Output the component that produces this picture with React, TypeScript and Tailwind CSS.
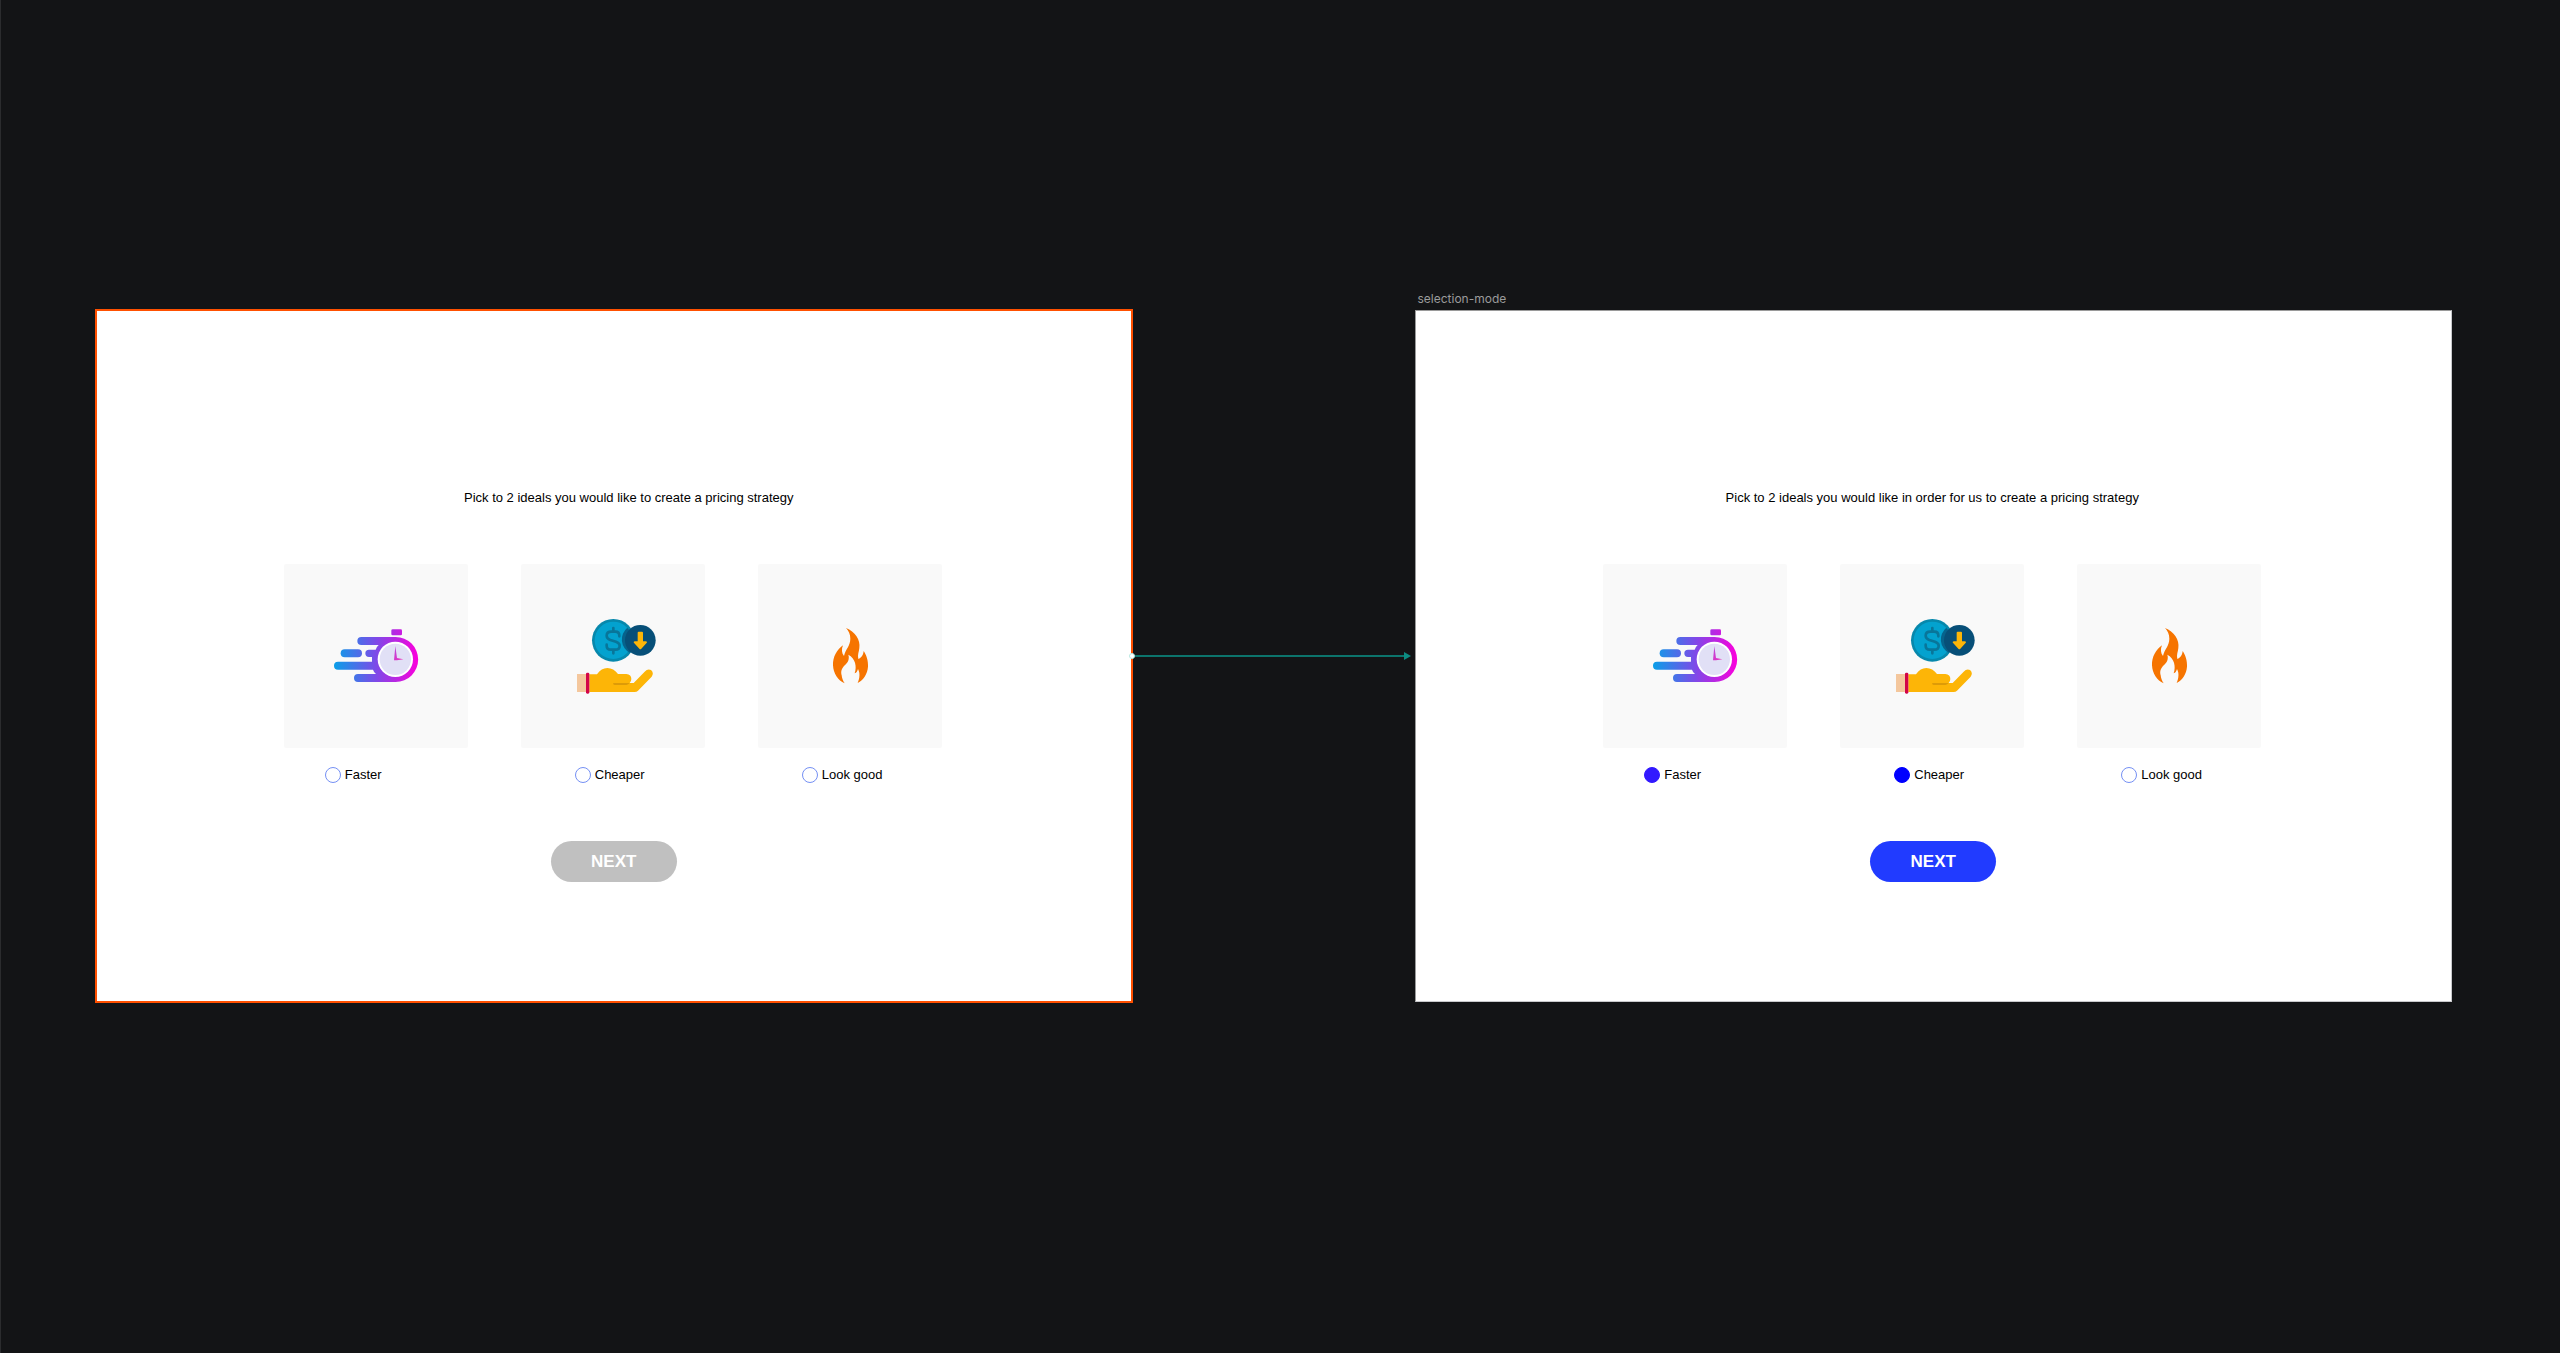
import { useId, useState } from "react";

function StopwatchIcon() {
  return (
    <svg viewBox="3 3 330 270" className="h-[90px] w-[110px]" aria-hidden="true">
      <defs>
        <linearGradient id="speed" gradientUnits="userSpaceOnUse" x1="42" y1="0" x2="294" y2="0">
          <stop offset="0" stopColor="#0a9fe8" />
          <stop offset="0.5" stopColor="#7d4ae8" />
          <stop offset="1" stopColor="#fb00dc" />
        </linearGradient>
        <linearGradient id="hands" x1="0" y1="0" x2="1" y2="1">
          <stop offset="0" stopColor="#b44be0" />
          <stop offset="1" stopColor="#f02bb8" />
        </linearGradient>
      </defs>
      <g fill="url(#speed)">
        <rect x="214" y="58" width="32" height="18" rx="4" />
        <path d="M124 81H227A67.500 67.500 0 0 1 227 216H114A12 12 0 0 1 114 192H168Q161 186 159 179H54A12 12 0 0 1 54 155H156V141H147A11 11 0 0 1 147 119H167Q170 110 176 105H124A12 12 0 0 1 124 81Z" />
        <rect x="62" y="118" width="64" height="24" rx="12" />
      </g>
      <circle cx="226" cy="148" r="53" fill="#fff" />
      <circle cx="226" cy="148" r="47" fill="#e1e0f6" />
      <path d="M226 108L231 144L250 148L231 151H222Z" fill="url(#hands)" />
    </svg>
  );
}

function SavingsIcon() {
  return (
    <svg viewBox="-18 3 330 300" className="h-[100px] w-[110px]" aria-hidden="true">
      <circle cx="148" cy="106" r="64" fill="#0788ac" />
      <circle cx="148" cy="106" r="56" fill="#03a2cf" />
      <path
        d="M148 69V80M148 134V145M166 94V92Q166 80 154 80H142Q128 80 128 92Q128 101 139 105L156 110Q167 114 167 122Q167 134 154 134H141Q128 134 128 122V119"
        fill="none"
        stroke="#08769a"
        strokeWidth="8"
        strokeLinecap="round"
      />
      <path d="M190 68A64 64 0 0 1 198 144A46 46 0 0 1 190 68Z" fill="#06638c" />
      <circle cx="229" cy="106" r="46" fill="#074f78" />
      <path d="M221 83Q221 80 224 80H234Q237 80 237 83V109H245Q252 110 247 115L232 131Q229 134 226 131L211 115Q206 110 213 109H221Z" fill="#fdb608" />
      <rect x="39" y="207" width="30" height="54" fill="#f4c79d" />
      <path d="M76 208H99Q112 189 130 189Q149 189 162 207H187Q202 208 202 222Q202 229 197 234H209L242 200Q251 190 261 195Q271 204 263 215L222 257Q218 261 212 261H76Z" fill="#fdb507" />
      <path d="M149 234H197Q194 239 187 240H152Q144 237 149 234Z" fill="#dd9b08" />
      <rect x="66" y="203" width="10" height="63" rx="4" fill="#d30548" />
    </svg>
  );
}

function FlameIcon() {
  return (
    <svg viewBox="0 3 210 240" className="h-20 w-[70px]" aria-hidden="true">
      <path
        d="M93 39C120 50 137 75 133 99C132 110 127 119 130 132C139 129 145 119 146 108C154 119 160 137 159 155C157 177 146 195 128 204C134 190 136 175 129 162C127 169 124 174 119 175C126 154 121 130 100 119C104 132 99 142 91 149C79 160 77 169 80 181C81 190 84 198 89 205C69 197 55 175 54 151C53 126 66 103 84 91C79 102 80 115 87 123C91 103 106 93 106 71C106 58 101 48 93 39Z"
        fill="#f67400"
      />
    </svg>
  );
}

const options = [
  { label: "Faster", icon: <StopwatchIcon />, indent: "pl-[41px]", fill: "checked:border-[#3219ff] checked:bg-[#3219ff]" },
  { label: "Cheaper", icon: <SavingsIcon />, indent: "pl-[54px]", fill: "checked:border-[#0000ff] checked:bg-[#0000ff]" },
  { label: "Look good", icon: <FlameIcon />, indent: "pl-[44px]", fill: "checked:border-[#0000ff] checked:bg-[#0000ff]" },
];

type ScreenProps = {
  prompt: string;
  promptStyle: string;
  outline: string;
  initial: string[];
};

function Screen({ prompt, promptStyle, outline, initial }: ScreenProps) {
  const id = useId();
  const [picked, setPicked] = useState(initial);
  const toggle = (label: string) =>
    setPicked((now) => (now.includes(label) ? now.filter((item) => item !== label) : [...now, label]));
  const ready = picked.length === 2;

  return (
    <form
      className={`flex flex-col items-center bg-white pt-[177px] pr-0.5 pb-[119px] font-['Liberation_Sans',sans-serif] text-[13px] leading-5 text-black ${outline}`}
      onSubmit={(event) => event.preventDefault()}
    >
      <p className={promptStyle}>{prompt}</p>
      <div className="mt-14 flex gap-[53px]">
        {options.map((option) => (
          <div key={option.label} className="w-[184px]">
            <div className="flex h-[184px] items-center justify-center rounded-xs bg-[#f9f9f9]">{option.icon}</div>
            <div className={`mt-[17px] flex items-center gap-1 ${option.indent}`}>
              <input
                id={id + option.label}
                type="checkbox"
                checked={picked.includes(option.label)}
                onChange={() => toggle(option.label)}
                className={`size-4 appearance-none rounded-full border border-[#7590f4] bg-white ${option.fill}`}
              />
              <label htmlFor={id + option.label}>{option.label}</label>
            </div>
          </div>
        ))}
      </div>
      <button
        type="submit"
        disabled={!ready}
        className="mt-14 ml-0.5 h-[41px] w-[126px] rounded-full bg-[#213bff] text-[17px] font-bold text-white disabled:bg-[#c0c0c0]"
      >
        NEXT
      </button>
    </form>
  );
}

export default function App() {
  return (
    <main className="min-h-screen border-l border-[#2b2c2e] bg-[#131416] pt-[290px] pr-[108px] pl-[94px]">
      <div className="flex items-start">
        <section className="flex-1 pt-[19px]">
          <Screen
            prompt="Pick to 2 ideals you would like to create a pricing strategy"
            promptStyle="pl-8"
            outline="border-2 border-[#ff5000]"
            initial={[]}
          />
        </section>
        <div className="-ml-1 flex w-[286px] items-center self-center pt-[19px] pr-1" aria-hidden="true">
          <span className="z-10 size-1.5 rounded-full border border-[#b8e8e0] bg-white" />
          <span className="h-0.5 flex-1 bg-[#0c746c]" />
          <svg viewBox="0 0 7 8" className="h-2 w-[7px]">
            <path d="M0 0L7 4L0 8Z" fill="#0c8c82" />
          </svg>
        </div>
        <section className="flex-1">
          <h2 className="h-5 pl-[3px] font-['Inter',sans-serif] text-xs leading-[18px] text-[#9b9b9b]">selection-mode</h2>
          <Screen
            prompt="Pick to 2 ideals you would like in order for us to create a pricing strategy"
            promptStyle=""
            outline="border border-[#9a9a9a] border-r-[#c8c9cc] border-b-[#c8c9cc]"
            initial={["Faster", "Cheaper"]}
          />
        </section>
      </div>
    </main>
  );
}
